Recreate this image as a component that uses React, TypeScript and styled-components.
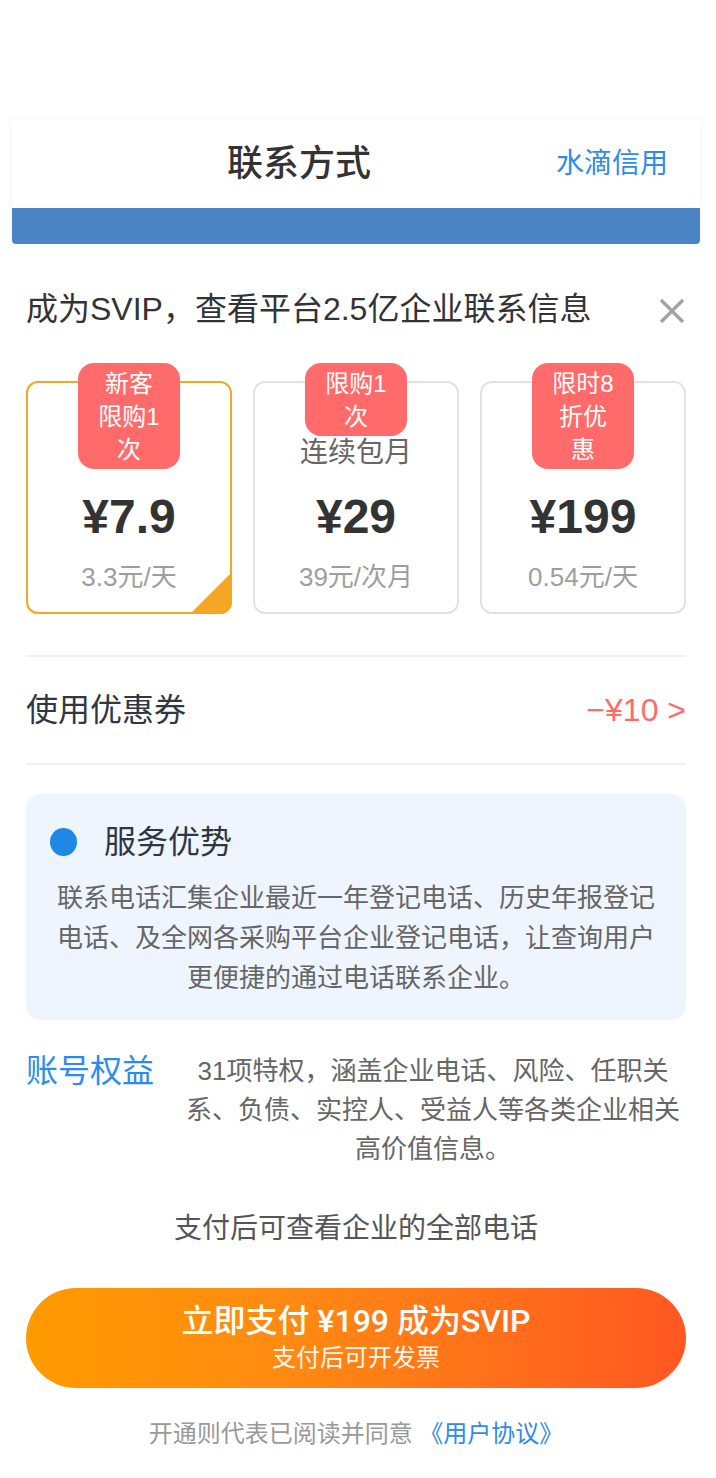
import React from 'react';
import styled, { createGlobalStyle } from 'styled-components';

const GlobalStyle = createGlobalStyle`
  * {
    box-sizing: border-box;
  }
  body {
    margin: 0;
    background: #fff;
    font-family: 'Liberation Sans', 'Noto Sans CJK SC', sans-serif;
  }
`;

type Plan = {
  badge: string;
  name: string;
  price: string;
  unit: string;
  active?: boolean;
};

// names of the first and last plan sit under their badges
const plans: Plan[] = [
  { badge: '新客限购1次', name: '体验卡', price: '¥7.9', unit: '3.3元/天', active: true },
  { badge: '限购1次', name: '连续包月', price: '¥29', unit: '39元/次月' },
  { badge: '限时8折优惠', name: '年卡', price: '¥199', unit: '0.54元/天' },
];

const CloseIcon = () => (
  <svg width="28" height="28" viewBox="0 0 28 28">
    <path d="M3 3 L25 25 M25 3 L3 25" stroke="#a3a3a3" strokeWidth="3.4" fill="none" />
  </svg>
);

const App = () => {
  return (
    <Page>
      <GlobalStyle />
      <HeaderCard>
        <HeaderRow>
          <HeaderTitle>联系方式</HeaderTitle>
          <HeaderLink>水滴信用</HeaderLink>
        </HeaderRow>
        <BlueBand />
      </HeaderCard>

      <Sheet>
        <TitleRow>
          <Title>成为SVIP，查看平台2.5亿企业联系信息</Title>
          <CloseButton>
            <CloseIcon />
          </CloseButton>
        </TitleRow>

        <PlanRow>
          {plans.map((plan) => (
            <PlanCard key={plan.price} $active={!!plan.active}>
              <Badge>{plan.badge}</Badge>
              <PlanName>{plan.name}</PlanName>
              <PlanPrice>{plan.price}</PlanPrice>
              <PlanUnit>{plan.unit}</PlanUnit>
            </PlanCard>
          ))}
        </PlanRow>

        <Divider />
        <CouponRow>
          <CouponLabel>使用优惠券</CouponLabel>
          <CouponValue>−¥10 &gt;</CouponValue>
        </CouponRow>
        <Divider />

        <ServiceBox>
          <ServiceHead>
            <Dot />
            <ServiceTitle>服务优势</ServiceTitle>
          </ServiceHead>
          <ServiceText>
            联系电话汇集企业最近一年登记电话、历史年报登记电话、及全网各采购平台企业登记电话，让查询用户更便捷的通过电话联系企业。
          </ServiceText>
        </ServiceBox>

        <RightsRow>
          <RightsLabel>账号权益</RightsLabel>
          <RightsText>
            31项特权，涵盖企业电话、风险、任职关系、负债、实控人、受益人等各类企业相关高价值信息。
          </RightsText>
        </RightsRow>

        <PayHint>支付后可查看企业的全部电话</PayHint>

        <PayButton>
          <PayMain>立即支付 ¥199 成为SVIP</PayMain>
          <PaySub>支付后可开发票</PaySub>
        </PayButton>

        <Agreement>
          开通则代表已阅读并同意 <AgreementLink>《用户协议》</AgreementLink>
        </Agreement>
      </Sheet>
    </Page>
  );
};

const Page = styled.div`
  width: 712px;
  min-height: 1478px;
  padding-top: 120px;
  background: #fff;
`;

const HeaderCard = styled.div`
  margin: 0 12px;
  background: #fff;
  box-shadow: 0 0 6px rgba(0, 0, 0, 0.06);
`;

const HeaderRow = styled.div`
  display: flex;
  align-items: center;
  height: 88px;
  padding: 0 32px 0 30px;
`;

const HeaderTitle = styled.div`
  flex: 1;
  text-align: center;
  font-size: 36px;
  font-weight: 500;
  color: #333;
  line-height: 50px;
`;

const HeaderLink = styled.div`
  font-size: 28px;
  color: #2d8ce6;
  line-height: 40px;
`;

const BlueBand = styled.div`
  height: 36px;
  background: #4b84c4;
  border-radius: 0 0 4px 4px;
`;

const Sheet = styled.div`
  padding: 40px 26px 0;
  background: #fff;
`;

const TitleRow = styled.div`
  display: flex;
  align-items: center;
  justify-content: space-between;
  height: 50px;
`;

const Title = styled.div`
  font-size: 32px;
  line-height: 50px;
  color: #333;
`;

const CloseButton = styled.div`
  display: flex;
  width: 28px;
  height: 28px;
  margin-top: 4px;
`;

const PlanRow = styled.div`
  display: grid;
  grid-template-columns: repeat(3, 1fr);
  gap: 21px;
  margin-top: 29px;
  padding-top: 18px;
`;

const PlanCard = styled.div<{ $active: boolean }>`
  position: relative;
  display: flex;
  flex-direction: column;
  align-items: center;
  height: 233px;
  padding-top: 50px;
  border: 2px solid ${(p) => (p.$active ? '#f5a623' : '#e2e2e2')};
  border-radius: 12px;

  &::after {
    content: '';
    display: ${(p) => (p.$active ? 'block' : 'none')};
    position: absolute;
    right: -2px;
    bottom: -2px;
    width: 42px;
    height: 42px;
    border-bottom-right-radius: 12px;
    background: linear-gradient(to bottom right, rgba(245, 166, 35, 0) 49%, #f5a623 51%);
  }
`;

const Badge = styled.div`
  position: absolute;
  top: -20px;
  left: 50%;
  transform: translateX(-50%);
  z-index: 1;
  width: 102px;
  padding: 4px 18px 3px;
  border-radius: 16px;
  background: #ff6b6b;
  color: #fff;
  font-size: 24px;
  line-height: 33px;
  text-align: center;
`;

const PlanName = styled.div`
  font-size: 28px;
  line-height: 40px;
  color: #666;
`;

const PlanPrice = styled.div`
  margin-top: 14px;
  font-size: 48px;
  font-weight: 700;
  line-height: 60px;
  color: #333;
`;

const PlanUnit = styled.div`
  margin-top: 12px;
  font-size: 26px;
  line-height: 36px;
  color: #9e9e9e;
`;

const Divider = styled.div`
  height: 2px;
  background: #f0f0f0;
  margin-top: 41px;
`;

const CouponRow = styled.div`
  display: flex;
  align-items: center;
  justify-content: space-between;
  height: 106px;

  & + ${Divider} {
    margin-top: 0;
  }
`;

const CouponLabel = styled.div`
  font-size: 32px;
  line-height: 44px;
  color: #2f3742;
`;

const CouponValue = styled.div`
  font-size: 32px;
  line-height: 44px;
  color: #ff6b6b;
`;

const ServiceBox = styled.div`
  margin-top: 29px;
  padding: 28px 24px 22px;
  border-radius: 14px;
  background: #eef5fe;
`;

const ServiceHead = styled.div`
  display: flex;
  align-items: center;
  height: 40px;
`;

const Dot = styled.div`
  width: 27px;
  height: 28px;
  border-radius: 50%;
  background: #1e88e5;
`;

const ServiceTitle = styled.div`
  margin-left: 27px;
  font-size: 32px;
  line-height: 40px;
  color: #2f3742;
`;

const ServiceText = styled.div`
  margin-top: 16px;
  font-size: 26px;
  line-height: 40px;
  color: #666;
  text-align: center;
`;

const RightsRow = styled.div`
  display: flex;
  align-items: flex-start;
  margin-top: 32px;
`;

const RightsLabel = styled.div`
  flex: 0 0 154px;
  font-size: 32px;
  line-height: 39px;
  color: #2a8cf0;
`;

const RightsText = styled.div`
  flex: 1;
  font-size: 26px;
  line-height: 39px;
  color: #666;
  text-align: center;
`;

const PayHint = styled.div`
  margin-top: 40px;
  font-size: 28px;
  line-height: 40px;
  color: #555;
  text-align: center;
`;

const PayButton = styled.div`
  display: flex;
  flex-direction: column;
  align-items: center;
  justify-content: center;
  height: 100px;
  margin-top: 39px;
  border-radius: 50px;
  background: linear-gradient(90deg, #ff9a00 0%, #ff8a12 40%, #ff5722 100%);
  color: #fff;
`;

const PayMain = styled.div`
  font-family: Roboto, 'Noto Sans CJK SC', sans-serif;
  font-size: 32px;
  font-weight: 500;
  line-height: 40px;
`;

const PaySub = styled.div`
  font-size: 24px;
  line-height: 34px;
  opacity: 0.92;
`;

const Agreement = styled.div`
  margin-top: 28px;
  font-size: 24px;
  line-height: 36px;
  color: #999;
  text-align: center;
`;

const AgreementLink = styled.span`
  color: #2d8ce6;
`;

export default App;
